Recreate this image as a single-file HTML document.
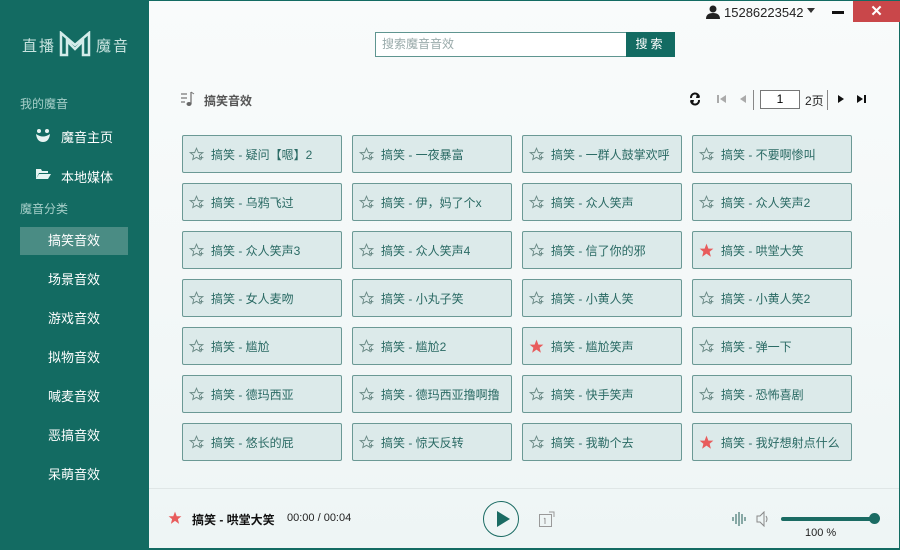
<!DOCTYPE html>
<html><head><meta charset="utf-8"><style>
*{margin:0;padding:0;box-sizing:border-box}
body{width:900px;height:550px;overflow:hidden;font-family:"Liberation Sans","Noto Sans CJK SC",sans-serif;background:#f3f8f8;position:relative}
.side{position:absolute;left:0;top:0;width:149px;height:550px;background:#136b62;color:#fff}
.main{position:absolute;left:149px;top:0;width:751px;height:550px;background:linear-gradient(180deg,#f9fbfb,#eef5f5);border-right:1px solid #136b62;border-top:1px solid #136b62;border-bottom:2px solid #136b62}
.ab{position:absolute}
.sec{position:absolute;left:20px;font-size:12px;color:#a6cfc9}
.it{position:absolute;left:20px;width:108px;height:28px;line-height:28px;text-align:center;font-size:13px;color:#fff}
.card{position:absolute;width:160px;height:38px;background:#dceaea;border:1px solid #6b9995;border-radius:2px;font-size:12px;color:#2a6a64;line-height:38px;padding-left:28px}
.card svg{position:absolute;left:6px;top:11px}
</style></head><body>
<div class="side">
 <div class="ab" style="left:22px;top:35px;font-size:15px;color:#c8e3df;letter-spacing:2px">直播</div>
 <svg class="ab" style="left:59px;top:31px" width="32" height="26" viewBox="0 0 32 26"><path d="M2 2 L16 14 L30 2 V24 H24 V10 L16 18 L8 10 V24 H2Z" fill="none" stroke="#d4ecea" stroke-width="2.5"/></svg>
 <div class="ab" style="left:96px;top:35px;font-size:15px;color:#c8e3df;letter-spacing:2px">魔音</div>
 <div class="sec" style="top:95px">我的魔音</div>
 <svg class="ab" style="left:34px;top:127px" width="18" height="16" viewBox="0 0 18 16"><path d="M2 7 Q9 12 16 7 Q15 15 9 15 Q3 15 2 7Z" fill="#e8f4f2"/><circle cx="5" cy="4" r="2" fill="#e8f4f2"/><circle cx="13" cy="4" r="2" fill="#e8f4f2"/></svg>
 <div class="ab" style="left:61px;top:127px;font-size:13px">魔音主页</div>
 <svg class="ab" style="left:35px;top:168px" width="16" height="12" viewBox="0 0 16 12"><path d="M1 1 H6 L7 3 H13 V5 H4 L1 11Z M4 6 H16 L13 11 H1Z" fill="#e8f4f2"/></svg>
 <div class="ab" style="left:61px;top:167px;font-size:13px">本地媒体</div>
 <div class="sec" style="top:200px">魔音分类</div>
 <div class="it" style="top:227px;background:#4a8c84">搞笑音效</div>
 <div class="it" style="top:266px">场景音效</div>
 <div class="it" style="top:305px">游戏音效</div>
 <div class="it" style="top:344px">拟物音效</div>
 <div class="it" style="top:383px">喊麦音效</div>
 <div class="it" style="top:422px">恶搞音效</div>
 <div class="it" style="top:461px">呆萌音效</div>
</div>
<div class="main">
 <svg class="ab" style="left:557px;top:4px" width="14" height="14" viewBox="0 0 14 14"><circle cx="7" cy="4" r="3.5" fill="#222"/><path d="M0 14 Q0 8 7 8 Q14 8 14 14Z" fill="#222"/></svg>
 <div class="ab" style="left:575px;top:4px;font-size:13px;color:#222">15286223542</div>
 <div class="ab" style="left:658px;top:7px;border:4px solid transparent;border-top:5px solid #333"></div>
 <div class="ab" style="left:683px;top:10px;width:12px;height:3px;background:#111"></div>
 <div class="ab" style="left:704px;top:0;width:47px;height:21px;background:#c9474a;color:#fff;text-align:center;font-size:15px;line-height:21px;font-weight:bold">✕</div>
 <div class="ab" style="left:226px;top:31px;width:252px;height:25px;border:1px solid #5f9590;background:#fff;font-size:12px;color:#9aa;line-height:23px;padding-left:6px">搜索魔音音效</div>
 <div class="ab" style="left:477px;top:31px;width:49px;height:25px;background:#136b62;color:#fff;font-size:12px;line-height:25px;text-align:center;letter-spacing:3px">搜索</div>
 <svg class="ab" style="left:32px;top:90px" width="14" height="16" viewBox="0 0 14 16"><path d="M0 3H6M0 7H6M0 11H4" stroke="#777" stroke-width="1.2"/><path d="M10 1V13" stroke="#777" stroke-width="1.3"/><path d="M10 1 L13 3" stroke="#777"/><ellipse cx="8" cy="13" rx="2.5" ry="2" fill="#666"/></svg>
 <div class="ab" style="left:55px;top:91px;font-size:12px;color:#555;font-weight:bold">搞笑音效</div>
 <svg class="ab" style="left:540px;top:91px" width="12" height="14" viewBox="0 0 12 14"><path d="M2 6 A4 4 0 0 1 10 5 M10 8 A4 4 0 0 1 2 9" stroke="#111" stroke-width="2" fill="none"/><path d="M8 2 L11 6 L7 6Z M4 12 L1 8 L5 8Z" fill="#111"/></svg>
 <svg class="ab" style="left:568px;top:93px" width="10" height="10"><rect x="0" y="1" width="2" height="8" fill="#aaa"/><path d="M9 1 L3 5 L9 9Z" fill="#aaa"/></svg>
 <svg class="ab" style="left:590px;top:93px" width="8" height="10"><path d="M7 1 L1 5 L7 9Z" fill="#aaa"/></svg>
 <div class="ab" style="left:604px;top:89px;width:1px;height:20px;background:#888"></div>
 <div class="ab" style="left:611px;top:89px;width:40px;height:19px;border:1px solid #777;background:#fff;text-align:center;font-size:12px;line-height:17px">1</div>
 <div class="ab" style="left:656px;top:91px;font-size:12px;color:#222">2页</div>
 <div class="ab" style="left:678px;top:89px;width:1px;height:20px;background:#888"></div>
 <svg class="ab" style="left:688px;top:93px" width="8" height="10"><path d="M1 1 L7 5 L1 9Z" fill="#111"/></svg>
 <svg class="ab" style="left:707px;top:93px" width="10" height="10"><path d="M1 1 L7 5 L1 9Z" fill="#111"/><rect x="8" y="1" width="2" height="8" fill="#111"/></svg>
 <div id="g"></div>
 <div class="ab" style="left:0;top:487px;width:750px;height:1px;background:#dfe6e6"></div>
 <svg class="ab" style="left:19px;top:510px" width="14" height="14" viewBox="0 0 24 24"><path d="M12 1 L15 9 L23 9 L17 14 L19 22 L12 17 L5 22 L7 14 L1 9 L9 9Z" fill="#e85c5c"/></svg>
 <div class="ab" style="left:43px;top:510px;font-size:12px;color:#111;font-weight:bold">搞笑 - 哄堂大笑</div>
 <div class="ab" style="left:138px;top:511px;font-size:11px;color:#222">00:00 / 00:04</div>
 <div class="ab" style="left:334px;top:500px;width:36px;height:36px;border:1.5px solid #1a6b63;border-radius:50%"></div>
 <div class="ab" style="left:348px;top:510px;border-left:13px solid #1a6b63;border-top:8px solid transparent;border-bottom:8px solid transparent"></div>
 <svg class="ab" style="left:390px;top:510px" width="16" height="17"><rect x="0.5" y="3.5" width="12" height="12" fill="none" stroke="#999"/><path d="M6 7V13 M5 8 L6 7" stroke="#999"/><path d="M10 1 L15 1 L15 6" stroke="#999" fill="none"/></svg>
 <svg class="ab" style="left:583px;top:510px" width="14" height="16"><path d="M1 6V10 M4 3V13 M7 1V15 M10 3V13 M13 6V10" stroke="#4f7f7a" stroke-width="1.3"/></svg>
 <svg class="ab" style="left:607px;top:510px" width="14" height="16"><path d="M1 5 H4 L8 1 V15 L4 11 H1Z" fill="none" stroke="#888"/><path d="M10 5 Q12 8 10 11" stroke="#888" fill="none"/></svg>
 <div class="ab" style="left:632px;top:516px;width:95px;height:4px;background:#1a6b63;border-radius:2px"></div>
 <div class="ab" style="left:720px;top:512px;width:11px;height:11px;background:#1a6b63;border-radius:50%"></div>
 <div class="ab" style="left:656px;top:526px;font-size:11px;color:#222">100 %</div>
</div>
<script>
var t=[["疑问【嗯】2","一夜暴富","一群人鼓掌欢呼","不要啊惨叫"],["乌鸦飞过","伊，妈了个x","众人笑声","众人笑声2"],["众人笑声3","众人笑声4","信了你的邪","哄堂大笑"],["女人麦吻","小丸子笑","小黄人笑","小黄人笑2"],["尴尬","尴尬2","尴尬笑声","弹一下"],["德玛西亚","德玛西亚撸啊撸","快手笑声","恐怖喜剧"],["悠长的屁","惊天反转","我勒个去","我好想射点什么"]];
var red={"2,3":1,"4,2":1,"6,3":1};var h="";
for(var r=0;r<7;r++)for(var c=0;c<4;c++){var s=red[r+","+c]?'<svg width="15" height="15" viewBox="0 0 24 24"><path d="M12 1 L15 9 L23 9 L17 14 L19 22 L12 17 L5 22 L7 14 L1 9 L9 9Z" fill="#e85c5c"/></svg>':'<svg width="15" height="15" viewBox="0 0 24 24"><path d="M12 2 L15 9 L22 9 L16.5 13.5 L18 20 L12 16.5 L6 20 L7.5 13.5 L2 9 L9 9Z" fill="none" stroke="#6a8a86" stroke-width="1.5"/><path d="M17 17H23M20 14V20" stroke="#6a8a86" stroke-width="1.5"/></svg>';
h+='<div class="card" style="left:'+(33+c*170)+'px;top:'+(134+r*48)+'px">'+s+'搞笑 - '+t[r][c]+'</div>';}
document.getElementById("g").innerHTML=h;
</script>
</body></html>
